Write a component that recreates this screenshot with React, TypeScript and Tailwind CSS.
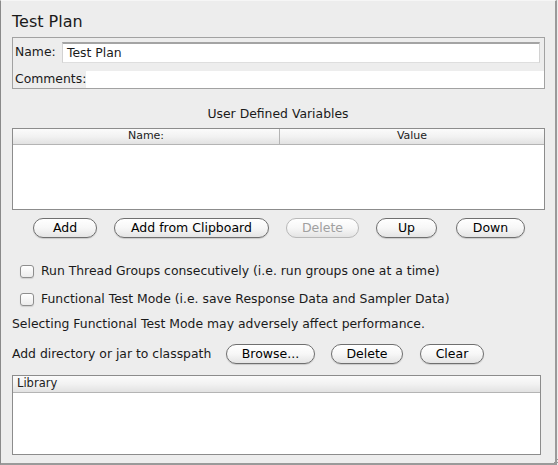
import React from 'react';

const font = { fontFamily: '"DejaVu Sans", "Liberation Sans", sans-serif' };

function AquaButton({ label, width, disabled }: { label: string; width: string; disabled?: boolean }) {
  return (
    <button
      type="button"
      className={`${width} h-[20px] rounded-full border text-[12.5px] leading-none flex items-center justify-center bg-gradient-to-b from-white via-[#f7f7f7] to-[#e4e4e4] ${
        disabled ? 'border-[#b8b8b8] text-[#a0a0a0]' : 'border-[#6f6f6f] text-black shadow-[0_1px_1px_rgba(0,0,0,0.15)]'
      }`}
    >
      {label}
    </button>
  );
}

function CheckRow({ label }: { label: string }) {
  return (
    <div className="flex items-center h-[20px] pl-[19px] gap-[7px]">
      <div className="w-[14px] h-[13px] rounded-[3px] border border-[#8e8e8e] bg-gradient-to-b from-white to-[#ececec] shadow-[0_1px_1px_rgba(0,0,0,0.12)]" />
      <span className="text-[12.4px]">{label}</span>
    </div>
  );
}

export default function App() {
  return (
    <div style={font} className="relative w-[558px] h-[465px] bg-[#ededed] text-[#1a1a1a] overflow-hidden">
      <div className="w-[557px] h-[465px] border-l border-r-2 border-b-2 border-t border-t-[#f6f6f6] border-l-[#8a8a8a] border-r-[#9a9a9a] border-b-[#9a9a9a] flex flex-col">
        {/* Title */}
        <div className="h-[20px] mt-[11px] pl-[11px] text-[16px] leading-[20px]">Test Plan</div>

        {/* Name / comments */}
        <div className="mt-[5px] ml-[11px] w-[533px] h-[52px] border border-[#a2a2a2] flex flex-col">
          <div className="flex items-center mt-[4px] h-[21px]">
            <span className="w-[49px] pl-[2px] text-[12.4px]">Name:</span>
            <div className="w-[478px] h-[21px] bg-white border-t-2 border-t-[#a4a4a4] border-x border-x-[#d2d2d2] border-b border-b-[#dedede] flex items-center pl-[4px] text-[12.4px]">
              Test Plan
            </div>
          </div>
          <div className="flex items-center mt-[8px] h-[17px]">
            <span className="w-[73px] pl-[2px] text-[12.4px] whitespace-nowrap">Comments:</span>
            <div className="flex-1 h-[17px] bg-white" />
          </div>
        </div>

        {/* User defined variables */}
        <div className="h-[18px] mt-[16px] text-center text-[12.4px] leading-[18px]">User Defined Variables</div>
        <div className="mt-[5px] ml-[11px] w-[533px] h-[82px] border border-[#8c8c8c] bg-white flex flex-col">
          <div className="h-[16px] flex border-b border-[#b4b4b4] bg-gradient-to-b from-[#fbfbfb] via-[#f2f2f2] to-[#e2e2e2] text-[11px] text-[#222]">
            <div className="w-[267px] border-r border-[#b4b4b4] flex items-center justify-center">Name:</div>
            <div className="flex-1 flex items-center justify-center">Value</div>
          </div>
        </div>

        {/* Table buttons */}
        <div className="mt-[8px] h-[20px] flex items-center">
          <div className="ml-[32px]"><AquaButton label="Add" width="w-[64px]" /></div>
          <div className="ml-[17px]"><AquaButton label="Add from Clipboard" width="w-[155px]" /></div>
          <div className="ml-[17px]"><AquaButton label="Delete" width="w-[73px]" disabled /></div>
          <div className="ml-[17px]"><AquaButton label="Up" width="w-[61px]" /></div>
          <div className="ml-[19px]"><AquaButton label="Down" width="w-[69px]" /></div>
        </div>

        {/* Options */}
        <div className="mt-[23px]">
          <CheckRow label="Run Thread Groups consecutively (i.e. run groups one at a time)" />
        </div>
        <div className="mt-[8px]">
          <CheckRow label="Functional Test Mode (i.e. save Response Data and Sampler Data)" />
        </div>
        <div className="mt-[5px] h-[20px] pl-[11px] flex items-center text-[12.4px]">
          Selecting Functional Test Mode may adversely affect performance.
        </div>
        <div className="mt-[10px] h-[20px] flex items-center">
          <span className="pl-[11px] w-[225px] text-[12.4px]">Add directory or jar to classpath</span>
          <AquaButton label="Browse..." width="w-[89px]" />
          <div className="ml-[16px]"><AquaButton label="Delete" width="w-[72px]" /></div>
          <div className="ml-[17px]"><AquaButton label="Clear" width="w-[64px]" /></div>
        </div>

        {/* Library */}
        <div className="mt-[11px] ml-[11px] w-[529px] h-[80px] border border-[#8c8c8c] bg-white flex flex-col">
          <div className="h-[17px] border-b border-[#b4b4b4] bg-gradient-to-b from-[#fbfbfb] via-[#f2f2f2] to-[#e2e2e2] text-[11.5px] text-[#222] pl-[4px] flex items-center">
            Library
          </div>
        </div>
      </div>

      {/* resize grip */}
      <svg className="absolute right-0 bottom-0" width="8" height="8" viewBox="0 0 8 8">
        <path d="M8 2 L2 8 M8 5 L5 8" stroke="#9a9a9a" strokeWidth="1" />
      </svg>
    </div>
  );
}
